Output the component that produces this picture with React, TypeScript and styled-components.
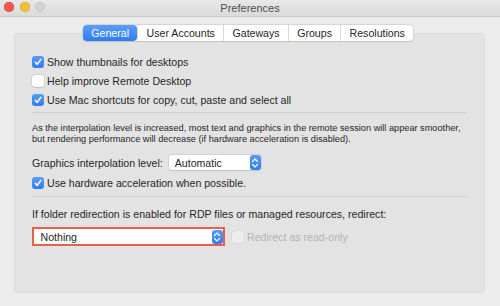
import React from 'react'
import styled, { createGlobalStyle } from 'styled-components'

const Global = createGlobalStyle`
html, body {
  margin: 0;
  padding: 0;
  width: 500px;
  height: 306px;
  overflow: hidden;
  background: #ececec;
}
body {
  font-family: "Liberation Sans", Arial, sans-serif;
  font-size: 10.6px;
  color: #262626;
}
`

const Check = ({ on, disabled }: { on?: boolean; disabled?: boolean }) => (
  <Box $on={on} $disabled={disabled}>
    {on && (
      <svg width="10" height="10" viewBox="0 0 10 10">
        <path d="M2.3 5.3 L4.2 7.4 L7.8 2.4" fill="none" stroke="#fff" strokeWidth="1.6" strokeLinecap="round" strokeLinejoin="round" />
      </svg>
    )}
  </Box>
)

const Stepper = () => (
  <StepBox>
    <svg width="8" height="12" viewBox="0 0 8 12">
      <path d="M1.5 4.5 L4 2 L6.5 4.5 M1.5 7.5 L4 10 L6.5 7.5" fill="none" stroke="#fff" strokeWidth="1.2" strokeLinecap="round" strokeLinejoin="round" />
    </svg>
  </StepBox>
)

const App = () => {
  return (
    <>
      <Global />
      <Window>
        <TitleBar>
          <Lights>
            <Light $c="#ee5a52" $b="#d8443c" />
            <Light $c="#f5bd3a" $b="#dba327" />
            <Light $c="#d3d3d3" $b="#c2c2c2" />
          </Lights>
          <Title>Preferences</Title>
        </TitleBar>
        <Body>
          <Panel>
            <Tabs>
              <Tab $active>General</Tab>
              <Tab>User Accounts</Tab>
              <Tab>Gateways</Tab>
              <Tab>Groups</Tab>
              <Tab>Resolutions</Tab>
            </Tabs>
            <Section>
              <Row><Check on />Show thumbnails for desktops</Row>
              <Row><Check />Help improve Remote Desktop</Row>
              <Row><Check on />Use Mac shortcuts for copy, cut, paste and select all</Row>
            </Section>
            <Divider $below={10} />
            <Section $gap={0}>
              <Note>
                As the interpolation level is increased, most text and graphics in the remote session will appear smoother,
                <br />
                but rendering performance will decrease (if hardware acceleration is disabled).
              </Note>
              <LabelRow>
                Graphics interpolation level:
                <Popup $w={92}>
                  <PopupText>Automatic</PopupText>
                  <Stepper />
                </Popup>
              </LabelRow>
              <Row><Check on />Use hardware acceleration when possible.</Row>
            </Section>
            <Divider $above={6} $below={10} />
            <Section $gap={0}>
              <Prompt>If folder redirection is enabled for RDP files or managed resources, redirect:</Prompt>
              <SelectRow>
                <Highlight>
                  <Popup $w={188} $flat>
                    <PopupText>Nothing</PopupText>
                    <Stepper />
                  </Popup>
                </Highlight>
                <Row $muted><Check disabled />Redirect as read-only</Row>
              </SelectRow>
            </Section>
          </Panel>
        </Body>
      </Window>
    </>
  )
}

export default App

const Window = styled.div`
width: 500px;
height: 306px;
display: flex;
flex-direction: column;
background: #ececec;
`

const TitleBar = styled.div`
height: 16px;
flex-shrink: 0;
position: relative;
display: flex;
align-items: center;
justify-content: center;
background: linear-gradient(180deg, #e8e8e8 0%, #dadada 100%);
border-bottom: 1px solid #c9c9c9;
`

const Lights = styled.div`
position: absolute;
left: 4px;
top: 2px;
display: flex;
gap: 5.5px;
`

const Light = styled.div<{ $c: string; $b: string }>`
width: 10px;
height: 10px;
border-radius: 50%;
background: ${p => p.$c};
box-shadow: inset 0 0 0 0.5px ${p => p.$b};
`

const Title = styled.div`
font-size: 11px;
color: #4d4d4d;
`

const Body = styled.div`
flex: 1;
padding: 16px 15px 13px 14px;
display: flex;
`

const Panel = styled.div`
flex: 1;
position: relative;
background: #e3e3e3;
border-radius: 4px;
border: 1px solid #dcdcdc;
padding: 21px 17px 0 17px;
display: flex;
flex-direction: column;
`

const Tabs = styled.div`
position: absolute;
top: -9px;
left: 68px;
display: flex;
height: 16px;
background: #fff;
border-radius: 4px;
box-shadow: 0 0 0 0.5px #c4c4c4, 0 0.5px 1px rgba(0,0,0,0.15);
`

const Tab = styled.div<{ $active?: boolean }>`
padding: 0 8.3px;
display: flex;
align-items: center;
font-size: 10.6px;
color: ${p => (p.$active ? '#fff' : '#262626')};
background: ${p => (p.$active ? 'linear-gradient(180deg, #5c9df8 0%, #2f7cf4 100%)' : 'transparent')};
border-radius: ${p => (p.$active ? '4px' : '0')};
& + & {
  border-left: 1px solid #dadada;
}
`

const Section = styled.div<{ $gap?: number }>`
display: flex;
flex-direction: column;
gap: ${p => (p.$gap ?? 5)}px;
`

const Row = styled.div<{ $muted?: boolean }>`
display: flex;
align-items: center;
height: 14px;
gap: 3px;
color: ${p => (p.$muted ? '#b3b3b3' : '#262626')};
white-space: nowrap;
`

const Box = styled.div<{ $on?: boolean; $disabled?: boolean }>`
width: 12px;
height: 12px;
box-sizing: border-box;
border-radius: 3px;
display: flex;
align-items: center;
justify-content: center;
background: ${p => (p.$on ? 'linear-gradient(180deg, #5a9cf8 0%, #2f7cf4 100%)' : p.$disabled ? '#ececec' : '#fff')};
box-shadow: ${p => (p.$on ? 'none' : p.$disabled ? '0 0 0 0.5px #d0d0d0' : '0 0 0 0.5px #c0c0c0, 0 0.5px 1px rgba(0,0,0,0.12)')};
`

const Divider = styled.div<{ $above?: number; $below?: number }>`
height: 1px;
background: #d2d2d2;
margin: ${p => p.$above ?? 5}px 0 ${p => p.$below ?? 9}px 0;
`

const Note = styled.div`
font-size: 9.2px;
line-height: 10.5px;
color: #262626;
white-space: nowrap;
`

const LabelRow = styled.div`
display: flex;
align-items: center;
gap: 6px;
margin: 11px 0 6px 0;
white-space: nowrap;
`

const Popup = styled.div<{ $w: number; $flat?: boolean }>`
width: ${p => p.$w}px;
height: ${p => (p.$flat ? 14 : 15)}px;
display: flex;
align-items: center;
justify-content: space-between;
background: #fff;
border-radius: ${p => (p.$flat ? '0' : '3px')};
box-shadow: ${p => (p.$flat ? 'none' : '0 0 0 0.5px #c4c4c4, 0 0.5px 1px rgba(0,0,0,0.15)')};
`

const PopupText = styled.span`
padding-left: 6px;
`

const StepBox = styled.div`
width: 11px;
height: 100%;
display: flex;
align-items: center;
justify-content: center;
border-radius: 3px;
background: linear-gradient(180deg, #5a9cf8 0%, #2f7cf4 100%);
`

const Prompt = styled.div`
white-space: nowrap;
margin-top: 1px;
`

const SelectRow = styled.div`
display: flex;
align-items: center;
gap: 7px;
margin-top: 7px;
`

const Highlight = styled.div`
border: 2.5px solid #e8604c;
padding: 0.5px;
background: #fff;
`
